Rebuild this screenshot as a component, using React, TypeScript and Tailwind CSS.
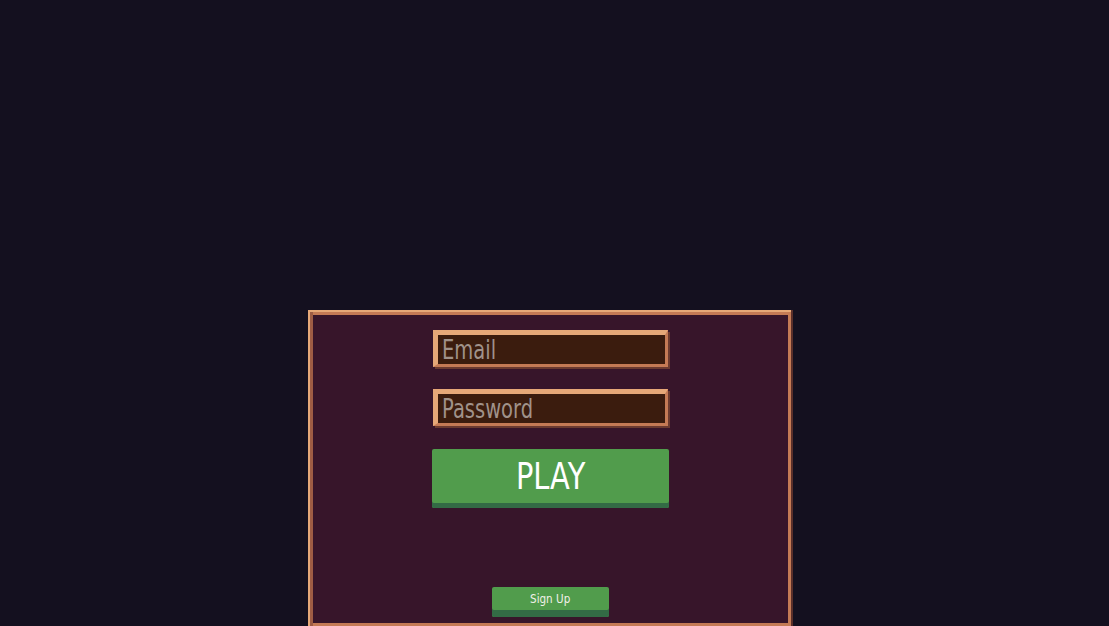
import { useState } from "react";

// Campo de texto con borde estilo pixel
function PixelInput({ placeholder, type }: { placeholder: string; type: string }) {
  const [valor, setValor] = useState("");
  return (
    <div className="w-[235px] h-[37px] bg-[#3b1c0e] border-t-[5px] border-l-[5px] border-r-[3px] border-b-[3px] border-t-[#e6a878] border-l-[#e6a878] border-r-[#c47a55] border-b-[#c47a55] shadow-[2px_2px_0_#6b3a30] overflow-hidden flex items-center pl-[4px]">
      <input
        type={type}
        value={valor}
        onChange={(e) => setValor(e.target.value)}
        placeholder={placeholder}
        className="w-[300px] shrink-0 bg-transparent outline-none origin-left scale-x-[0.75] text-[26px] leading-none text-[#d8c8c0] placeholder:text-[#a0928a] font-['DejaVu_Sans',sans-serif]"
      />
    </div>
  );
}

export default function App() {
  return (
    <div className="min-h-screen h-[626px] bg-[#14101f] overflow-hidden">
      <div className="pt-[310px] pl-[308px]">
        {/* PANEL */}
        <div className="w-[483px] h-[316px] bg-[#37152a] border-t-2 border-l-2 border-[#e6a878] shadow-[inset_3px_0_0_#9e5c44,inset_0_3px_0_#c47a55,inset_-3px_0_0_#c47a55,inset_0_-3px_0_#c47a55,2px_0_0_#5a2f2a] flex flex-col items-center pt-[18px]">
          <PixelInput placeholder="Email" type="email" />
          <div className="mt-[22px]">
            <PixelInput placeholder="Password" type="password" />
          </div>

          {/* BOTÓN PLAY */}
          <button className="mt-[23px] w-[237px] h-[59px] bg-[#519c4c] rounded-[2px] shadow-[inset_0_-5px_0_#336b45] pb-[5px] flex items-center justify-center">
            <span className="inline-block scale-x-[0.76] text-[38px] leading-none text-white font-['DejaVu_Sans',sans-serif]">
              PLAY
            </span>
          </button>

          {/* BOTÓN SIGN UP */}
          <button className="mt-[79px] w-[117px] h-[30px] bg-[#519c4c] rounded-[2px] shadow-[inset_0_-7px_0_#336b45] pb-[7px] flex items-center justify-center">
            <span className="inline-block scale-x-[0.8] text-[13px] leading-none text-[#f0f0e8] font-['DejaVu_Sans',sans-serif]">
              Sign Up
            </span>
          </button>
        </div>
      </div>
    </div>
  );
}
